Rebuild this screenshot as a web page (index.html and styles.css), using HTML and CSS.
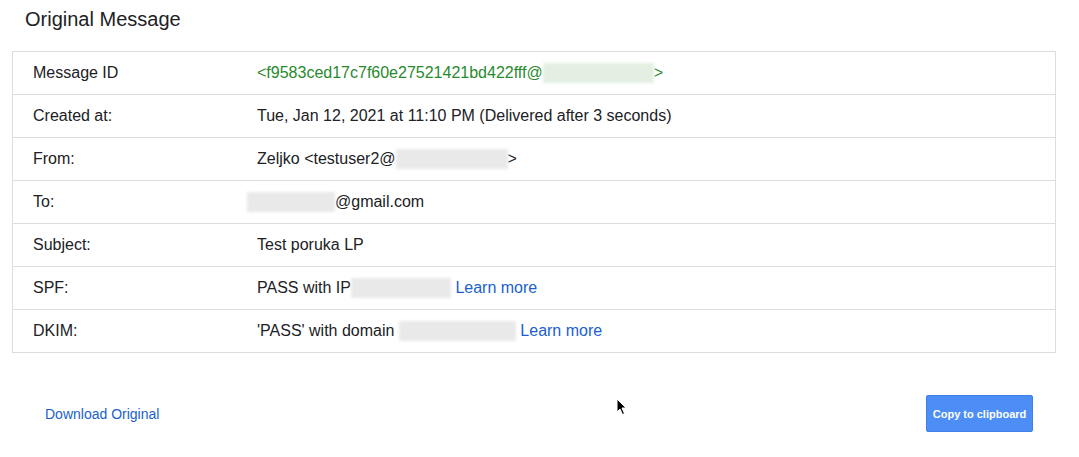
FILE: index.html
```html
<!DOCTYPE html>
<html lang="en">
<head>
    <meta charset="UTF-8">
    <title>Original Message</title>
    <link rel="stylesheet" href="styles.css">
</head>
<body>
    <div class="page">
        <h1 class="title">Original Message</h1>

        <table class="headers">
            <tr>
                <td class="label">Message ID</td>
                <td class="value green">&lt;f9583ced17c7f60e27521421bd422fff@<span class="blur blur-green" style="width:111px"></span>&gt;</td>
            </tr>
            <tr>
                <td class="label">Created at:</td>
                <td class="value">Tue, Jan 12, 2021 at 11:10 PM (Delivered after 3 seconds)</td>
            </tr>
            <tr>
                <td class="label">From:</td>
                <td class="value">Zeljko &lt;testuser2@<span class="blur" style="width:112px"></span>&gt;</td>
            </tr>
            <tr>
                <td class="label">To:</td>
                <td class="value"><span class="blur blur-left" style="width:88px"></span>@gmail.com</td>
            </tr>
            <tr>
                <td class="label">Subject:</td>
                <td class="value">Test poruka LP</td>
            </tr>
            <tr>
                <td class="label">SPF:</td>
                <td class="value">PASS with IP<span class="blur" style="width:100px"></span> <a href="#" class="link">Learn more</a></td>
            </tr>
            <tr>
                <td class="label">DKIM:</td>
                <td class="value">'PASS' with domain <span class="blur" style="width:117px"></span> <a href="#" class="link">Learn more</a></td>
            </tr>
        </table>

        <div class="actions">
            <a href="#" class="link download">Download Original</a>
            <button class="copy">Copy to clipboard</button>
        </div>

        <!-- mouse pointer from the screenshot -->
        <svg class="cursor" width="12" height="18" viewBox="0 0 12 18">
            <path d="M1 1 L1 14 L4 11 L6.5 16.5 L8.5 15.5 L6 10 L10 10 Z" fill="#000" stroke="#fff" stroke-width="1"/>
        </svg>
    </div>
</body>
</html>
```

FILE: styles.css
```css
body {
    margin: 0;
    font-family: "Liberation Sans", Arial, sans-serif;
    background-color: #ffffff;
    color: #202124;
}
.page {
    position: relative;
    padding: 0 24px 0 12px;
}
.title {
    font-size: 20px;
    font-weight: normal;
    margin: 0;
    padding: 8px 0 0 13px;
    height: 51px;
    box-sizing: border-box;
}
.headers {
    width: 1044px;
    border-collapse: collapse;
    border: 1px solid #dddddd;
    font-size: 16px;
}
.headers td {
    height: 42px;
    padding: 0;
    border-top: 1px solid #dddddd;
    vertical-align: middle;
}
.label {
    width: 224px;
    padding-left: 20px !important;
}
.value {
    white-space: nowrap;
}
.green {
    color: #288a2e;
}
.blur {
    display: inline-block;
    height: 20px;
    vertical-align: -5px;
    background-color: #e9e9e9;
    filter: blur(1.5px);
}
.blur-green {
    background-color: #e3efe3;
}
.blur-left {
    margin-left: -10px;
}
.link {
    color: #1a5fcf;
    text-decoration: none;
}
.actions {
    display: flex;
    justify-content: space-between;
    align-items: center;
    margin-top: 42px;
    padding-left: 33px;
    padding-right: 22px;
}
.download {
    font-size: 14px;
}
.copy {
    width: 107px;
    height: 37px;
    background-color: #4d8ef6;
    border: 1px solid #3f7fe8;
    border-radius: 2px;
    color: #ffffff;
    font-family: "Liberation Sans", Arial, sans-serif;
    font-size: 11px;
    font-weight: bold;
    padding: 0;
}
.cursor {
    position: absolute;
    left: 616px;
    top: 398px;
}
```
